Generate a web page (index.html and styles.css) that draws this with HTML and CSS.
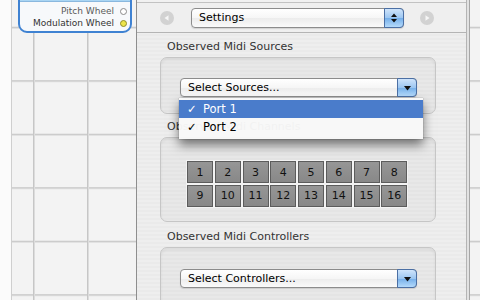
FILE: index.html
```html
<!DOCTYPE html>
<html>
<head>
<meta charset="utf-8">
<link rel="stylesheet" href="styles.css">
</head>
<body>
<div class="window">
  <div class="edge"></div>
  <div class="canvas">
    <div class="node">
      <div class="node-head"></div>
      <div class="node-body">
        <div class="port-row dim"><span>Pitch Wheel</span><i class="port"></i></div>
        <div class="port-row"><span>Modulation Wheel</span><i class="port on"></i></div>
      </div>
    </div>
    <svg class="wire" width="40" height="40" viewBox="0 0 40 40"><path d="M6 23 C 10 22, 13 17, 19 13" fill="none" stroke="#e6d93a" stroke-width="2"/></svg>
    <div class="drawer">
      <div class="drawer-main">
        <div class="topline"></div>
        <div class="toolbar">
          <span class="nav"><svg width="14" height="14" viewBox="0 0 14 14"><circle cx="7" cy="7" r="7" fill="#d2d2d2"/><path d="M4.5 7 L8.5 4.3 L8.5 9.7 Z" fill="#f6f6f6"/></svg></span>
          <div class="popup settings"><span class="ptext">Settings</span><span class="pbtn"><svg width="8" height="12" viewBox="0 0 8 12"><path d="M1 5 L4 1.5 L7 5 Z M1 7 L4 10.5 L7 7 Z" fill="#111"/></svg></span></div>
          <span class="nav fwd"><svg width="14" height="14" viewBox="0 0 14 14"><circle cx="7" cy="7" r="7" fill="#d2d2d2"/><path d="M9.5 7 L5.5 4.3 L5.5 9.7 Z" fill="#f6f6f6"/></svg></span>
        </div>
        <div class="content">
          <div class="label">Observed Midi Sources</div>
          <div class="group g1">
            <div class="popup wide"><span class="ptext">Select Sources...</span><span class="pbtn"><svg width="9" height="6" viewBox="0 0 9 6"><path d="M1 1 L8 1 L4.5 5.5 Z" fill="#111"/></svg></span>
              <div class="menu">
                <div class="mrow sel"><span class="check">✓</span>Port 1</div>
                <div class="mrow"><span class="check">✓</span>Port 2</div>
              </div>
            </div>
          </div>
          <div class="label l2">Observed Midi Channels</div>
          <div class="group g2">
            <div class="channels">
              <span>1</span><span>2</span><span>3</span><span>4</span><span>5</span><span>6</span><span>7</span><span>8</span>
              <span>9</span><span>10</span><span>11</span><span>12</span><span>13</span><span>14</span><span>15</span><span>16</span>
            </div>
          </div>
          <div class="label l3">Observed Midi Controllers</div>
          <div class="group g3">
            <div class="popup wide"><span class="ptext">Select Controllers...</span><span class="pbtn"><svg width="9" height="6" viewBox="0 0 9 6"><path d="M1 1 L8 1 L4.5 5.5 Z" fill="#111"/></svg></span></div>
          </div>
        </div>
      </div>
      <div class="drawer-edge"></div>
    </div>
  </div>
</div>
</body>
</html>
```
FILE: styles.css
```css
html, body { margin: 0; padding: 0; }
body { width: 480px; height: 300px; overflow: hidden; background: #fff; font-family: "DejaVu Sans", "Liberation Sans", sans-serif; }
.window { display: flex; width: 480px; height: 300px; overflow: hidden; }
.edge { width: 11px; background: #fbfbfb; border-right: 1px solid #cfcfcf; flex: none; }
.canvas {
  flex: 1; position: relative; display: flex; align-items: stretch;
  background-color: #f3f3f3;
  background-image:
    linear-gradient(to right, transparent 21px, #c6c6c6 21px, #c6c6c6 22px, #dcdcdc 22px, #dcdcdc 23px, transparent 23px),
    linear-gradient(to bottom, transparent 27px, #c6c6c6 27px, #c6c6c6 28px, #dcdcdc 28px, #dcdcdc 29px, transparent 29px);
  background-size: 54px 100%, 100% 53.5px;
  background-position: 0 0, 0 0;
  background-repeat: repeat-x, repeat-y;
}
.node {
  position: absolute; left: 6px; top: -20px; width: 114px; height: 53px; box-sizing: border-box;
  border: 2px solid #3f82d2; border-radius: 9px; background: #f7f9fb; overflow: hidden; z-index: 1;
}
.node-head { height: 20px; background: #a9d5f3; border-bottom: 1px solid #8ab8de; box-sizing: border-box; }
.node-body { padding-top: 3px; }
.port-row { height: 12px; display: flex; align-items: center; justify-content: flex-end; gap: 6px; padding-right: 3px; font-size: 9px; color: #333; }
.port-row.dim { color: #5a5a5a; }
.port { display: block; width: 7px; height: 7px; box-sizing: border-box; border: 1px solid #8a8a8a; border-radius: 50%; background: #fff; }
.port.on { background: #ece44a; border-color: #8f8a2a; }
.wire { position: absolute; left: 120px; top: 0; z-index: 0; }
.drawer {
  position: relative; z-index: 2; margin-left: 124px; width: 334px; height: 300px; flex: none; display: flex;
  border-left: 1px solid #8e8e8e; box-sizing: border-box; overflow: hidden;
  background: repeating-linear-gradient(to bottom, #eeeeee 0, #eeeeee 2px, #eaeaea 2px, #eaeaea 4px);
}
.drawer-main { width: 329px; flex: none; display: flex; flex-direction: column; }
.drawer-main > * { flex: none; }
.drawer-edge { width: 2px; flex: none; border-left: 1px solid #b4b4b4; border-right: 1px solid #a6a6a6; background: #e2e2e2; }
.topline { height: 2px; background: #f1f1f1; border-bottom: 1px solid #c2c2c2; }
.toolbar {
  height: 29px; border-bottom: 1px solid #b4b4b4; display: flex; align-items: center; padding-left: 23px;
  background: #efefef;
}
.nav { display: block; width: 14px; height: 14px; flex: none; }
.nav svg { display: block; }
.popup {
  position: relative; display: flex; align-items: center; height: 20px; box-sizing: border-box; flex: none;
  border: 1px solid #8c8c8c; border-radius: 4px;
  background: linear-gradient(to bottom, #ffffff 0%, #f6f6f6 50%, #ececec 51%, #fafafa 100%);
  box-shadow: 0 1px 1px rgba(0,0,0,0.12);
  font-size: 11px; color: #000;
}
.popup .ptext { flex: 1; padding-left: 7px; white-space: nowrap; }
.popup .pbtn {
  align-self: stretch; width: 18px; margin: -1px -1px -1px 0; border: 1px solid #4b6fa4; border-radius: 0 4px 4px 0;
  background: linear-gradient(to bottom, #cfe4fb 0%, #9cc6f1 50%, #74aee9 51%, #b4dafb 100%);
  display: flex; align-items: center; justify-content: center;
}
.settings { margin-left: 17px; width: 213px; }
.fwd { margin-left: 16px; }
.content { padding: 7px 0 0 23px; display: flex; flex-direction: column; }
.content > * { flex: none; }
.label { height: 14px; line-height: 14px; font-size: 11px; color: #333; padding-left: 7px; margin-bottom: 3px; }
.l2 { margin-top: 6px; }
.l3 { margin-top: 8px; }
.group {
  width: 276px; box-sizing: border-box; border: 1px solid #c6c6c6; border-radius: 7px;
  background: rgba(0,0,0,0.025); box-shadow: inset 0 2px 3px rgba(0,0,0,0.06);
}
.g1 { height: 57px; padding: 20px 0 0 19px; }
.g2 { height: 85px; padding: 23px 0 0 26px; }
.g3 { height: 60px; padding: 21px 0 0 19px; }
.wide { width: 237px; height: 19px; }
.menu {
  position: absolute; left: -2px; top: 19px; width: 244px; box-sizing: border-box; padding: 2px 0 3px;
  background: rgba(248,248,248,0.97); box-shadow: 0 6px 10px rgba(0,0,0,0.5), 0 0 1px rgba(0,0,0,0.4);
  z-index: 5;
}
.mrow { height: 18px; line-height: 18px; font-size: 11.5px; color: #000; padding-left: 8px; display: flex; }
.mrow .check { width: 16px; font-weight: bold; }
.mrow.sel { background: #4a7ccb; color: #fff; }
.channels { display: grid; grid-template-columns: repeat(8, 26px); grid-auto-rows: 22px; column-gap: 1.75px; row-gap: 1.5px; }
.channels span {
  display: flex; align-items: center; justify-content: center; box-sizing: border-box;
  background: linear-gradient(to bottom, #969696, #888888); border: 1px solid #5c5c5c;
  box-shadow: 0 0 0 1px #f3f3f3; font-size: 11px; color: #111;
}
```
